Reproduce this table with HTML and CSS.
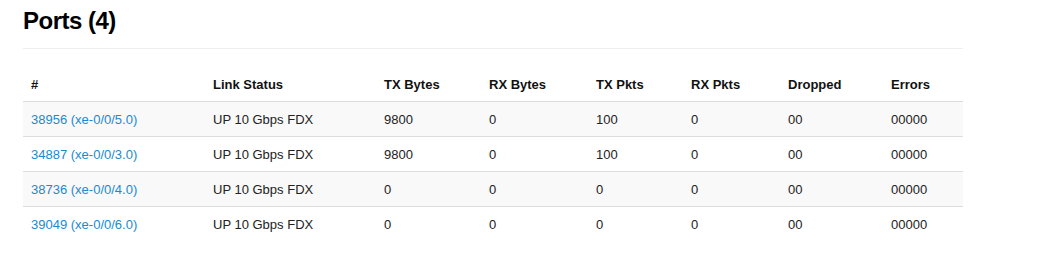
FILE: index.html
```html
<!DOCTYPE html>
<html>
<head>
<meta charset="utf-8">
<link rel="stylesheet" href="styles.css">
</head>
<body>
<div class="container">
  <h1 class="page-header">Ports (4)</h1>
  <table class="ports">
    <colgroup>
      <col class="c-id"><col class="c-link"><col class="c-txb"><col class="c-rxb">
      <col class="c-txp"><col class="c-rxp"><col class="c-drop"><col class="c-err">
    </colgroup>
    <thead>
      <tr><th>#</th><th>Link Status</th><th>TX Bytes</th><th>RX Bytes</th><th>TX Pkts</th><th>RX Pkts</th><th>Dropped</th><th>Errors</th></tr>
    </thead>
    <tbody>
      <tr><td><a href="#">38956 (xe-0/0/5.0)</a></td><td>UP 10 Gbps FDX</td><td>9800</td><td>0</td><td>100</td><td>0</td><td>00</td><td>00000</td></tr>
      <tr><td><a href="#">34887 (xe-0/0/3.0)</a></td><td>UP 10 Gbps FDX</td><td>9800</td><td>0</td><td>100</td><td>0</td><td>00</td><td>00000</td></tr>
      <tr><td><a href="#">38736 (xe-0/0/4.0)</a></td><td>UP 10 Gbps FDX</td><td>0</td><td>0</td><td>0</td><td>0</td><td>00</td><td>00000</td></tr>
      <tr><td><a href="#">39049 (xe-0/0/6.0)</a></td><td>UP 10 Gbps FDX</td><td>0</td><td>0</td><td>0</td><td>0</td><td>00</td><td>00000</td></tr>
    </tbody>
  </table>
</div>
</body>
</html>
```

FILE: styles.css
```css
html, body {
  margin: 0;
  padding: 0;
  background: #fff;
}
body {
  font-family: "Liberation Sans", Arial, sans-serif;
  font-size: 13px;
  line-height: 18px;
  color: #222;
}
.container {
  width: 940px;
  margin-left: 23px;
}
.page-header {
  margin: 3px 0 18px;
  padding-bottom: 9px;
  border-bottom: 1px solid #eee;
  font-size: 24px;
  line-height: 36px;
  font-weight: bold;
  letter-spacing: -0.5px;
  color: #000;
}
.ports {
  width: 940px;
  table-layout: fixed;
  border-collapse: collapse;
  border-spacing: 0;
}
.c-id { width: 182px; }
.c-link { width: 171px; }
.c-txb { width: 105px; }
.c-rxb { width: 107px; }
.c-txp { width: 95px; }
.c-rxp { width: 97px; }
.c-drop { width: 103px; }
.c-err { width: 80px; }
.ports th, .ports td {
  padding: 9px 8px 7px;
  text-align: left;
  vertical-align: top;
  white-space: nowrap;
}
.ports th {
  font-weight: bold;
  color: #111;
  vertical-align: bottom;
}
.ports td {
  border-top: 1px solid #ddd;
}
.ports tbody tr:nth-child(odd) td {
  background: #f9f9f9;
}
.ports a {
  color: #1a8ad0;
  text-decoration: none;
}
```
